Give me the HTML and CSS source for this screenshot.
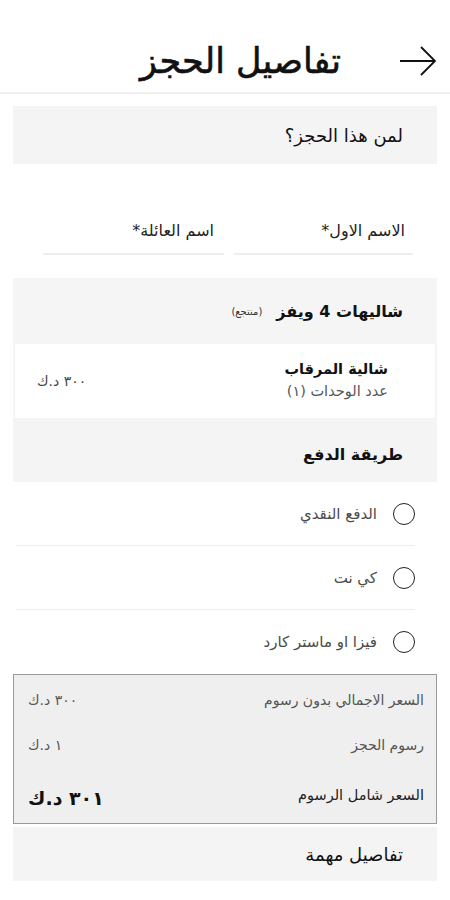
FILE: index.html
```html
<!DOCTYPE html>
<html lang="ar" dir="rtl">
<head>
  <meta charset="UTF-8">
  <meta name="viewport" content="width=device-width, initial-scale=1">
  <title>تفاصيل الحجز</title>
  <link rel="stylesheet" href="styles.css">
</head>
<body>
  <header class="topbar">
    <button class="back" aria-label="رجوع">
      <svg width="38" height="30" viewBox="0 0 38 30" fill="none" stroke="#111" stroke-width="1.8">
        <path d="M1 15 H36"/>
        <path d="M22 1 L36 15 L22 29"/>
      </svg>
    </button>
    <h1>تفاصيل الحجز</h1>
  </header>

  <main class="page">
    <div class="section-head">لمن هذا الحجز؟</div>

    <div class="names">
      <label class="field">
        <span>الاسم الاول*</span>
      </label>
      <label class="field">
        <span>اسم العائلة*</span>
      </label>
    </div>

    <section class="resort">
      <div class="resort-title">
        <strong>شاليهات 4 ويفز</strong>
        <small>(منتجع)</small>
      </div>
      <div class="unit">
        <div class="unit-info">
          <div class="unit-name">شالية المرقاب</div>
          <div class="unit-count">عدد الوحدات (١)</div>
        </div>
        <div class="unit-price">٣٠٠ د.ك</div>
      </div>
    </section>

    <div class="section-head bold">طريقة الدفع</div>

    <ul class="payments">
      <li><span class="radio"></span>الدفع النقدي</li>
      <li><span class="radio"></span>كي نت</li>
      <li><span class="radio"></span>فيزا او ماستر كارد</li>
    </ul>

    <div class="summary">
      <div class="row"><span>السعر الاجمالي بدون رسوم</span><span>٣٠٠ د.ك</span></div>
      <div class="row"><span>رسوم الحجز</span><span>١ د.ك</span></div>
      <div class="row total"><span>السعر شامل الرسوم</span><strong>٣٠١ د.ك</strong></div>
    </div>

    <div class="section-head mid">تفاصيل مهمة</div>
  </main>
</body>
</html>
```

FILE: styles.css
```css
body {
  margin: 0;
  font-family: 'DejaVu Sans', sans-serif;
  background: #fff;
  color: #111;
}

.topbar {
  height: 94px;
  box-sizing: border-box;
  display: flex;
  align-items: center;
  padding: 30px 13px 0 13px;
  border-bottom: 2px solid #efefef;
}

.back {
  background: none;
  border: none;
  padding: 0;
  cursor: pointer;
  display: flex;
}

.topbar h1 {
  margin: 0 58px 0 0;
  font-size: 35px;
  font-weight: normal;
  line-height: 1;
  -webkit-text-stroke: 0.6px #111;
}

.page {
  padding: 12px 13px 20px;
}

.section-head {
  background: #f4f4f4;
  height: 58px;
  display: flex;
  align-items: center;
  padding-right: 34px;
  font-size: 18px;
}

.section-head.bold {
  height: 64px;
  font-size: 16px;
  font-weight: bold;
  padding-top: 8px;
  box-sizing: border-box;
}

.section-head.mid {
  margin-top: 3px;
  height: 54px;
  font-size: 18px;
}

.names {
  display: flex;
  gap: 10px;
  padding: 52px 24px 0 30px;
}

.field {
  flex: 1;
  box-sizing: border-box;
  height: 39px;
  border-bottom: 2px solid #eeeeee;
  padding: 5px 8px 0 0;
  font-size: 16px;
  color: #222;
}

.field + .field {
  padding-right: 10px;
}

.resort {
  margin-top: 23px;
  background: #f5f5f5;
  padding: 0 2px;
}

.resort-title {
  height: 66px;
  display: flex;
  align-items: center;
  gap: 14px;
  padding-right: 32px;
}

.resort-title strong {
  font-size: 16px;
}

.resort-title small {
  font-size: 10px;
  color: #333;
}

.unit {
  background: #fff;
  height: 74px;
  display: flex;
  align-items: center;
  justify-content: space-between;
  padding: 0 47px 0 22px;
}

.unit-name {
  font-size: 14.5px;
  font-weight: bold;
  margin-top: -2px;
}

.unit-count {
  font-size: 14.5px;
  color: #555;
  margin-top: 6px;
}

.unit-price {
  font-size: 14px;
  color: #444;
}

.payments {
  list-style: none;
  margin: 0;
  padding: 0 22px 0 3px;
}

.payments li {
  display: flex;
  align-items: center;
  gap: 16px;
  height: 64px;
  box-sizing: border-box;
  font-size: 15px;
  color: #4a4a4a;
  border-bottom: 1px solid #eeeeee;
}

.payments li:last-child {
  border-bottom: none;
}

.radio {
  width: 20px;
  height: 20px;
  border: 1.5px solid #222;
  border-radius: 50%;
}

.summary {
  background: #efefef;
  border: 1px solid #9a9a9a;
  padding: 2px 12px 0 14px;
}

.summary .row {
  display: flex;
  justify-content: space-between;
  align-items: center;
  height: 45px;
  font-size: 14px;
  color: #555;
}

.summary .total {
  height: 56px;
  color: #222;
  font-size: 14.5px;
}

.summary .total strong {
  font-size: 19px;
  color: #111;
  padding-top: 6px;
}
```
